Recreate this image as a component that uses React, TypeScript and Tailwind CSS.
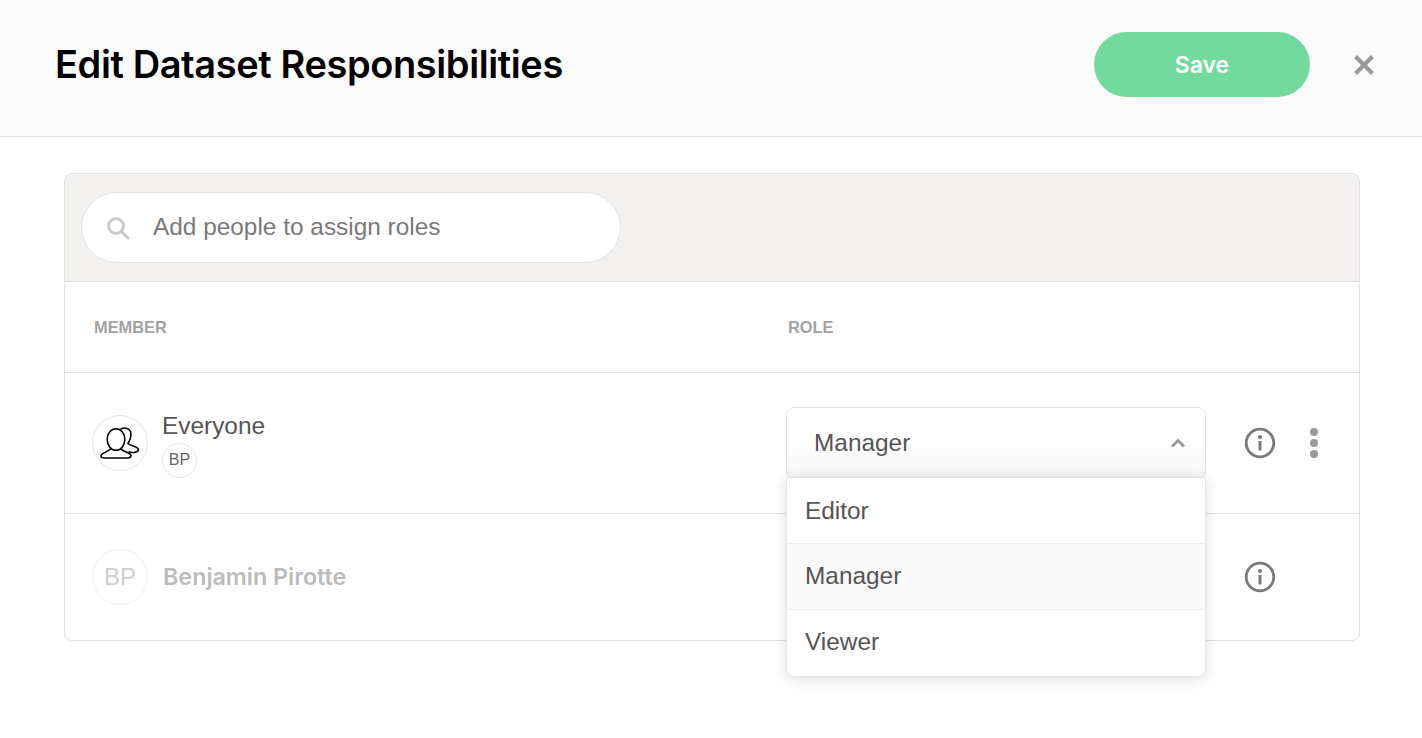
import React from 'react';

const InfoIcon = () => (
  <svg width="32" height="32" viewBox="0 0 32 32" fill="none" className="shrink-0">
    <circle cx="16" cy="16" r="13.8" stroke="#7b7b7b" strokeWidth="2.8" />
    <circle cx="16" cy="10" r="2" fill="#7b7b7b" />
    <rect x="14.5" y="14" width="3" height="9.5" fill="#7b7b7b" />
  </svg>
);

const GroupIcon = () => (
  <svg width="40" height="34" viewBox="0 0 40 34" fill="none" stroke="#000" strokeWidth="1.6" strokeLinecap="round">
    <path d="M21 3C24 1 29 2 30.5 5.5C32 10 30 14 28 17.5C31 20 38.5 20.5 38.5 23.5C38.5 26.5 33 27 29 26" />
    <ellipse cx="16" cy="13.5" rx="8.8" ry="10.8" fill="#fff" />
    <path d="M10.5 23C8 26 1 27 1 30C1 32 3 32 5 32H27C30 32 31 31 31 29.5C31 27 25 26 21.5 23.5" />
  </svg>
);

const App = () => {
  return (
    <div className="h-[738px] bg-white font-['Liberation_Sans',sans-serif] overflow-hidden">
      <header className="h-[137px] bg-[#fbfbfb] border-b border-[#e2e2e2] flex items-center pl-[55px] pr-[48px] pb-[8px]">
        <h1 className="font-['Inter',sans-serif] text-[38px] font-semibold text-black tracking-[-0.4px] flex-1">Edit Dataset Responsibilities</h1>
        <button className="w-[216px] h-[65px] rounded-full bg-[#72da9e] text-white text-[23px] font-semibold font-['Inter',sans-serif] pt-[2px]">Save</button>
        <svg width="20" height="20" viewBox="0 0 20 20" className="ml-[44px] mt-[1px]" stroke="#999" strokeWidth="4.2">
          <path d="M1.5 1.5L18.5 18.5M18.5 1.5L1.5 18.5" />
        </svg>
      </header>

      <div className="mt-[36px] ml-[64px] w-[1296px] h-[468px] border border-[#e2e2e2] rounded-lg">
        <div className="h-[108px] bg-[#f2f1ef] rounded-t-lg border-b border-[#e2e2e2] pt-[18px] pl-[16px]">
          <div className="w-[540px] h-[71px] bg-white rounded-full border border-[#e4e3e0] flex items-center pl-[24px]">
            <svg width="24" height="24" viewBox="0 0 24 24" fill="none" stroke="#c9cbc9" strokeWidth="3" strokeLinecap="round">
              <circle cx="10" cy="10" r="7.5" />
              <path d="M16 16L22 22" />
            </svg>
            <span className="ml-[23px] -mt-[1px] text-[24.4px] text-[#7a7a7a]">Add people to assign roles</span>
          </div>
        </div>

        <div className="h-[91px] border-b border-[#e2e2e2] flex items-center pl-[29px] text-[16.4px] font-bold text-[#a3a3a3]">
          <div className="w-[694px]">MEMBER</div>
          <div>ROLE</div>
        </div>

        <div className="h-[141px] border-b border-[#e2e2e2] flex items-center pl-[27px]">
          <div className="w-[56px] h-[56px] rounded-full border border-[#e4e4e4] flex items-center justify-center shrink-0">
            <GroupIcon />
          </div>
          <div className="ml-[14px] w-[624px] flex flex-col items-start">
            <span className="mt-[2px] text-[24.4px] leading-[30px] text-[#555]">Everyone</span>
            <span className="mt-[2px] w-[35px] h-[35px] rounded-full border border-[#e4e4e4] flex items-center justify-center text-[16px] text-[#666]">BP</span>
          </div>
          <div className="relative w-[420px] h-[72px] shrink-0 border border-[#e2e2e2] rounded-lg bg-gradient-to-b from-white from-50% to-[#f6f6f6] flex items-center pl-[27px] pr-[19px] justify-between">
            <span className="text-[24.4px] text-[#555]">Manager</span>
            <svg width="16" height="10" viewBox="0 0 16 10" fill="none" stroke="#999" strokeWidth="3">
              <path d="M2 8.5L8 2.5L14 8.5" />
            </svg>
            <div className="absolute z-10 -left-px top-[69px] w-[420px] h-[200px] bg-white border border-[#e4e4e4] rounded-b-lg shadow-[0_2px_14px_rgba(0,0,0,0.14)] flex flex-col text-[24.4px] text-[#555]">
              <div className="h-[66px] flex items-center pl-[18px] pt-[2px] border-b border-[#eeeeee]">Editor</div>
              <div className="h-[66px] flex items-center pl-[18px] border-b border-[#eeeeee] bg-[#fafafa]">Manager</div>
              <div className="flex-1 flex items-center pl-[18px] pb-[2px]">Viewer</div>
            </div>
          </div>
          <div className="ml-[38px]"><InfoIcon /></div>
          <div className="ml-[34px] flex flex-col gap-[3px]">
            <span className="w-[8px] h-[8px] rounded-full bg-[#999]" />
            <span className="w-[8px] h-[8px] rounded-full bg-[#999]" />
            <span className="w-[8px] h-[8px] rounded-full bg-[#999]" />
          </div>
        </div>

        <div className="h-[126px] flex items-center pl-[27px]">
          <div className="w-[56px] h-[56px] rounded-full border border-[#eeeeee] flex items-center justify-center text-[24px] text-[#cfcfcf] shrink-0">BP</div>
          <span className="ml-[15px] w-[1042px] font-['Inter',sans-serif] text-[23.3px] font-semibold text-[#bcbcbc]">Benjamin Pirotte</span>
          <div className="ml-[39px]"><InfoIcon /></div>
        </div>
      </div>
    </div>
  );
};

export default App;
